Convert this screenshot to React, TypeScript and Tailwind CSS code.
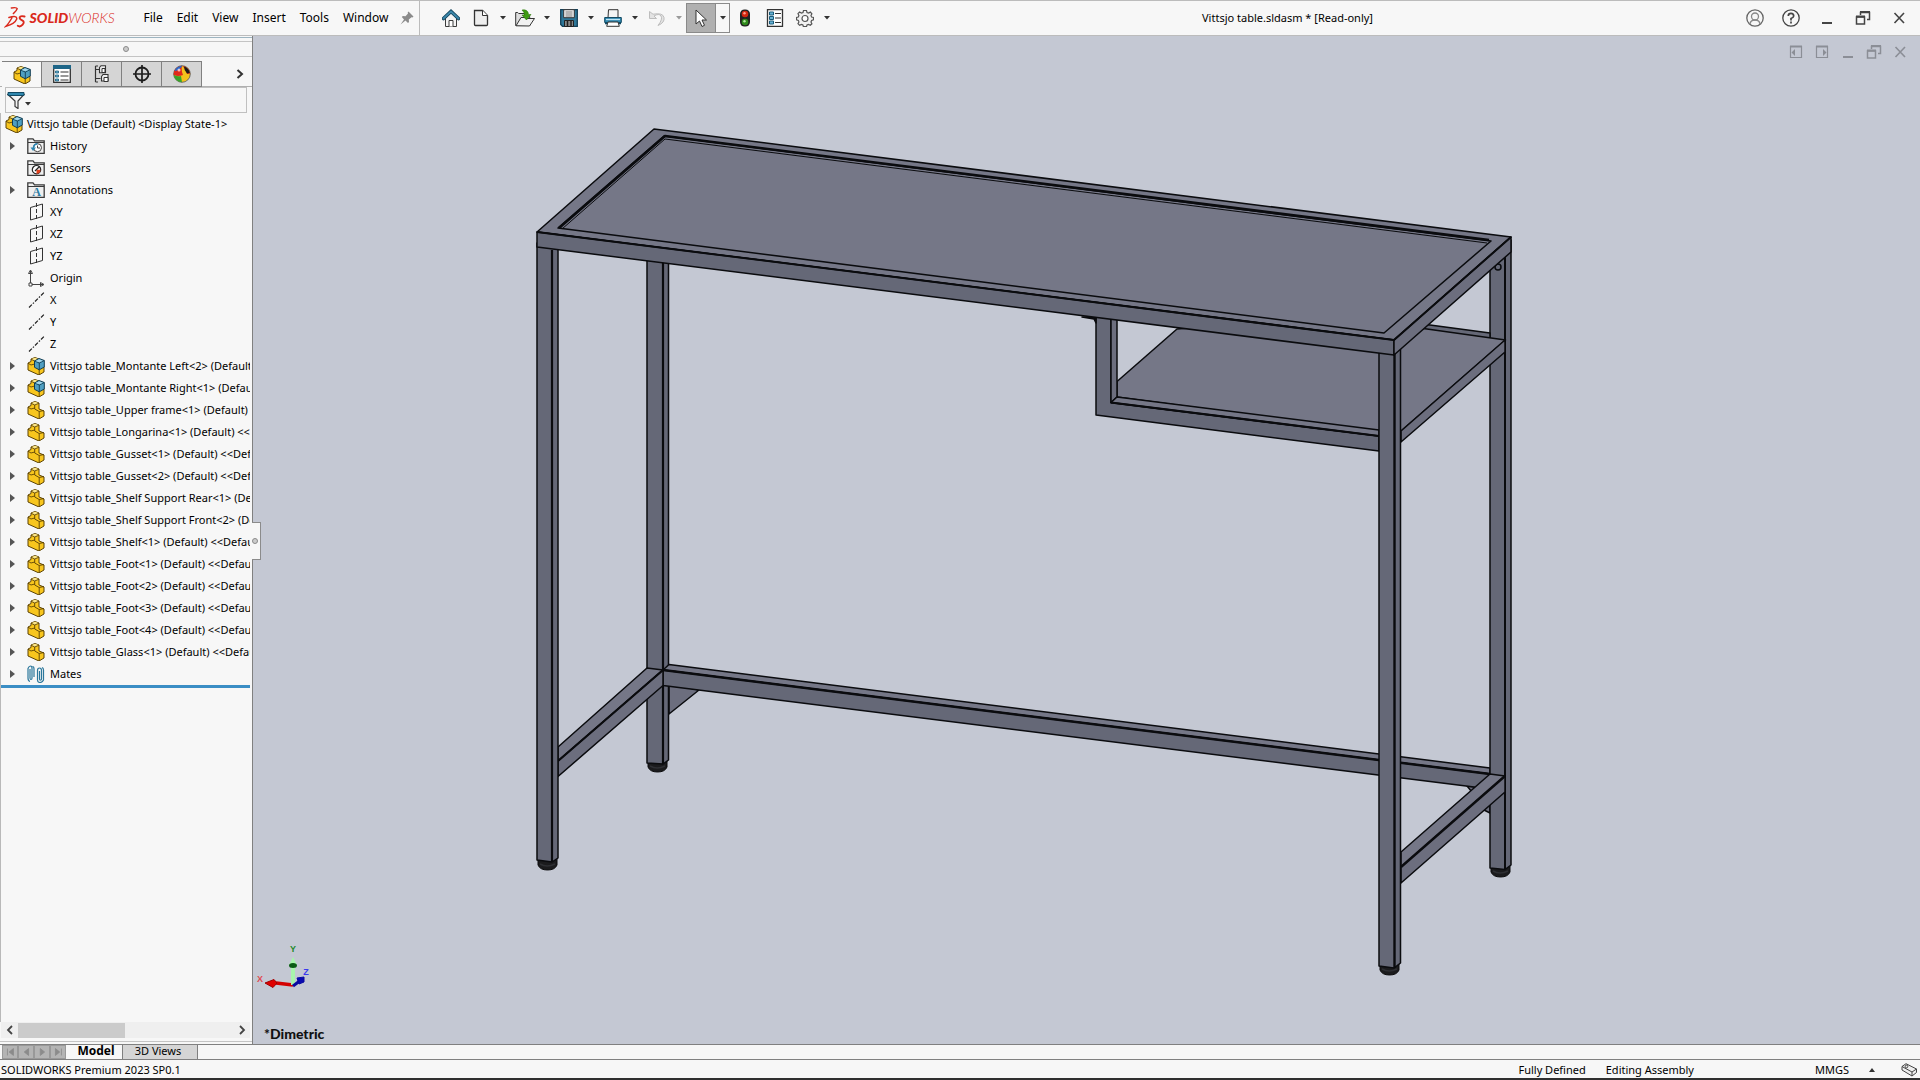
import React from "react";

type P = { children: React.ReactNode; s?: number; className?: string };
const Svg = ({ children, s = 18, className = "" }: P) => (
  <svg width={s} height={s} viewBox={`0 0 ${s} ${s}`} className={`shrink-0 ${className}`} fill="none" aria-hidden="true">
    {children}
  </svg>
);

/* ---------- toolbar icons ---------- */
const HomeIcon = () => (
  <Svg>
    <path d="M3.5 9v8.5h11V9L9 4z" fill="#f4f4f4" stroke="#3c3c3c" />
    <path d="M7 17.5v-6h4v6" fill="#fff" stroke="#3c3c3c" />
    <path d="M1.5 9.5 9 2.5l7.500 7" stroke="#12445e" strokeWidth="3.600" strokeLinecap="round" />
    <path d="M1.500 9.500 9 2.500l7.500 7" stroke="#3c87aa" strokeWidth="1.800" strokeLinecap="round" />
  </Svg>
);
const NewIcon = () => (
  <Svg>
    <path d="M2.500 1.500h8l5 5v9q0 1-1 1h-11q-1 0-1-1z" fill="#eee" stroke="#333" strokeWidth="1.300" />
    <path d="M10.500 1.500v5h5" fill="#fff" stroke="#333" />
  </Svg>
);
const OpenIcon = () => (
  <svg width="20" height="18" viewBox="0 0 20 18" fill="none" aria-hidden="true">
    <path d="M.7 16.500v-13h2l1 1h6v3h5v9z" fill="#ddd" stroke="#333" />
    <path d="M1 16.800 6 8.500h4l1 1h8.500l-5 7.500z" fill="#f1f1f1" stroke="#333" />
    <path d="M7 1q6-1 6.500 4.500H16L11.500 11 7 6h2.500Q9.500 3 7 1z" fill="#3f9a12" stroke="#2b7a08" strokeWidth=".6" />
  </svg>
);
const SaveIcon = () => (
  <Svg>
    <path d="M.7.7h16.600v16.600H2.500L.7 15.500z" fill="#2d7799" stroke="#143f56" strokeWidth="1.300" />
    <path d="M3.700.7h10.600v8H3.700z" fill="#f2f2f2" stroke="#333" />
    <path d="M5.500 3h7M5.500 5h7M5.500 7h7" stroke="#777" />
    <path d="M4.500 11.500h9v6h-9z" fill="#888" stroke="#222" />
    <path d="M7.500 12v5M11 12v5" stroke="#222" strokeWidth="1.500" />
  </Svg>
);
const PrintIcon = () => (
  <Svg>
    <path d="M4.500.7h9.500v8H4z" fill="#f4f4f4" stroke="#333" />
    <path d="M.7 8.500h16.600v5H.7z" fill="#2f87ae" stroke="#134a63" />
    <path d="M2 10.500h14" stroke="#bfe3f2" strokeWidth="1.300" />
    <path d="M4 13h10l1.300 4.300H2.700z" fill="#fff" stroke="#333" />
    <path d="M1 14.500h2M15 14.500h2" stroke="#134a63" strokeWidth="1.300" />
  </Svg>
);
const UndoIcon = () => (
  <Svg>
    <path d="M1.500 2.500v7h7L6 7q5-3 7 0t-3 9.500q7-3 6-8T5 5.200z" fill="#e3e3e3" stroke="#bdbdbd" strokeLinejoin="round" />
  </Svg>
);
const CursorIcon = () => (
  <Svg>
    <path d="M4 1v14l3.500-3 2.500 5.500 2.500-1.200L10 11h4.500z" fill="#fff" stroke="#333" />
  </Svg>
);
const LightIcon = () => (
  <Svg>
    <rect x="4" y=".5" width="10" height="17" rx="4.500" fill="#222" />
    <circle cx="9" cy="5" r="3.300" fill="#d3260f" />
    <circle cx="8.500" cy="4.300" r="1.200" fill="#ffa08e" />
    <circle cx="9" cy="13" r="3.300" fill="#2f8a1b" />
    <circle cx="8.500" cy="12.300" r="1.200" fill="#b3e6a0" />
  </Svg>
);
const ListIcon = () => (
  <Svg>
    <path d="M1.500.7h15v16.600h-15z" fill="#fff" stroke="#333" strokeWidth="1.300" />
    <path d="M3.500 3h4v3h-4zM3.500 7.500h4v3h-4zM3.500 12h4v3h-4z" fill="#69b4d6" stroke="#195b7a" />
    <path d="M9 4.500h6M9 9h6M9 13.500h6" stroke="#333" />
  </Svg>
);
const GearIcon = () => (
  <Svg>
    <path d="M7.500 1.500h3l.5 2 1.500.6 1.900-1 1.500 1.700-.9 1.800.6 1.500 1.900.4v2.300l-1.900.7-.6 1.500.9 1.800-1.600 1.500-1.800-.9-1.500.6-.5 1.700H7.400l-.5-1.700-1.500-.6-1.800.9L2 14.700l.9-1.800-.6-1.500-1.800-.6V8.400L2.300 8l.6-1.500L2 4.700l1.600-1.600 1.800 1L7 3.500z" fill="#f2f2f2" stroke="#555" strokeWidth="1.200" />
    <circle cx="9" cy="9.500" r="3" fill="#fff" stroke="#555" strokeWidth="1.200" />
  </Svg>
);
const Caret = ({ dim = false }: { dim?: boolean }) => (
  <svg width="6" height="4" viewBox="0 0 6 4" className="shrink-0" aria-hidden="true">
    <path d="M0 0h6L3 3.500z" fill={dim ? "#9a9a9a" : "#333"} />
  </svg>
);

/* ---------- tree icons ---------- */
const PartBody = () => (
  <>
    <path d="M1 6 4 4.500V2l4-1.500 4 1.500v6l5 2v5l-5 3L1 13z" fill="#f8c61e" stroke="#5c4305" strokeLinejoin="round" />
    <path d="M4 2.200 7.700 4 12 2.200 8 .7z" fill="#fbe68a" />
    <path d="M4 2.200 7.700 4v4l4.500 2.500L17 9.500M7.700 4 12 2.200M12.200 10.500V18M1 6.200 4 8l3.700-1" stroke="#5c4305" strokeWidth=".9" />
  </>
);
const PartIcon = () => (
  <Svg>
    <PartBody />
  </Svg>
);
const AsmIcon = () => (
  <Svg>
    <PartBody />
    <path d="M7.500 4 12 1.500 17.300 3.500V10l-5 2.800-4.800-2.500z" fill="#4f9fc2" stroke="#123d52" strokeLinejoin="round" />
    <path d="M7.500 4 12.300 6v6.500M12.300 6l5-2.500" stroke="#123d52" strokeWidth=".9" />
    <path d="M8.500 4 12 2.300 16 3.700 12.300 5.300z" fill="#a6d7eb" />
  </Svg>
);
const Folder = () => <path d="M.8 16.300V1.800H6l1.500 2h9.700v12.500z" fill="#efefef" stroke="#3a3a3a" strokeWidth="1.300" />;
const HistoryIcon = () => (
  <Svg>
    <Folder />
    <path d="M1 5.500h16" stroke="#3a3a3a" />
    <circle cx="10.500" cy="10.700" r="4" fill="#fff" stroke="#444" />
    <path d="M10.500 8.500v2.500h2.500" stroke="#444" />
    <path d="M10.500 6.700a4 4 0 0 0-4 4" stroke="#2b86b3" strokeWidth="1.500" />
    <path d="M3.500 10.500h5.500l-3 3.500z" fill="#2b86b3" />
  </Svg>
);
const SensorIcon = () => (
  <Svg>
    <Folder />
    <path d="M1 5.500h16" stroke="#3a3a3a" />
    <circle cx="9.500" cy="10.700" r="4.200" fill="#fff" stroke="#222" strokeWidth="1.200" />
    <path d="M9.500 10.700h4a4 4 0 0 1-4 4z" fill="#e2401c" />
    <path d="m8 12 4-4" stroke="#222" strokeWidth="1.300" />
  </Svg>
);
const AnnotIcon = () => (
  <Svg>
    <Folder />
    <path d="M1 5.500h16" stroke="#3a3a3a" />
    <text x="9.500" y="15" textAnchor="middle" fontSize="12" fontWeight="700" fill="#2b7da5" fontFamily="Liberation Serif, serif">A</text>
  </Svg>
);
const PlaneIcon = () => (
  <Svg>
    <path d="M3.500 4.500 15.500 1v12.500L3.500 17z" stroke="#333" />
    <path d="M9.500 0v18" stroke="#333" strokeDasharray="4 2" />
  </Svg>
);
const OriginIcon = () => (
  <Svg>
    <path d="M3.500 14V2M5 15.500h11M1.500 4.500 3.500 1l2 3.500zM13.500 13.500l3.500 2-3.500 2z" stroke="#444" />
    <path d="M2 14h3v3H2z" fill="#fff" stroke="#444" />
  </Svg>
);
const AxisIcon = () => (
  <Svg>
    <path d="M2 16.500 17 1.500" stroke="#222" strokeWidth="1.200" strokeDasharray="4 1.500 1.500 1.500" />
  </Svg>
);
const MatesIcon = () => (
  <Svg>
    <path d="M3 4v9q0 1.500 1 1.500t1-1.500V3.500Q5 1 3.500 1T1 3.500V13q0 3 2 3.500M5.500 1.500Q7 1.500 7 4v8" stroke="#2b779b" strokeWidth="1.200" />
    <path d="M12.500 6v8q0 1.200 1 1.200t1-1.200V5.500q0-2.500-2-2.500t-2 2.500V15q0 2.500 2.500 2.500T16.500 15V5q0-2-1.500-2.500" stroke="#2b779b" strokeWidth="1.200" />
  </Svg>
);

/* ---------- panel tab icons ---------- */
const PropIcon = () => (
  <Svg>
    <path d="M.7.7h16.600v16.600H.7z" fill="#fff" stroke="#333" strokeWidth="1.300" />
    <path d="M0 0h18v4H0z" fill="#1e6587" />
    <path d="M2.500 6h3v2h-3zM2.500 10h3v2h-3zM2.500 14h3v2h-3z" fill="#69b4d6" stroke="#195b7a" strokeWidth=".8" />
    <path d="M7.500 7h8M7.500 11h8M7.500 15h8" stroke="#333" strokeWidth="1.200" />
  </Svg>
);
const ConfigIcon = () => (
  <Svg>
    <path d="M2.500 1v16M2.500 4.500h4M2.500 13.500h5M5 1H2.500M5 17H2.500" stroke="#333" strokeWidth="1.200" />
    <path d="M6.500 2.500 8 .7h4.500v7h-6zM8.500 11.500l1.500-2h5v6.500H8.500z" fill="#eee" stroke="#333" strokeWidth="1.100" />
    <path d="M9 3.500h3v4H9zM11 12.500h4v4h-4z" fill="#fff" stroke="#333" />
  </Svg>
);
const TargetIcon = () => (
  <Svg>
    <circle cx="9" cy="9" r="6.500" stroke="#1c1c1c" strokeWidth="1.800" />
    <path d="M9 0v18M0 9h18" stroke="#1c1c1c" strokeWidth="1.700" />
  </Svg>
);
const BallIcon = () => (
  <Svg>
    <circle cx="9" cy="9" r="8.300" fill="#f2c21c" stroke="#555" strokeWidth=".8" />
    <path d="M9 .7A8.300 8.300 0 0 0 .7 10Q5 12 10 10 8 5 9 .7z" fill="#df2a1c" />
    <path d="M9 .7A8.300 8.300 0 0 0 1.500 6Q5 6 8.500 2z" fill="#2a67c8" />
    <path d="M.8 10Q5 12 8 11l1 6.300A8.300 8.300 0 0 1 .8 10z" fill="#38a32c" />
    <path d="M9.500 1q6 .5 7.800 7.500L14 9q-1-5-4.500-8z" fill="#df2a1c" />
    <path d="M11 1.500q5 1.500 5.800 6.500L14 8.500q-3-3-3-7z" fill="#1b1b1b" />
    <circle cx="6" cy="5" r="1.500" fill="#fff" opacity=".7" />
  </Svg>
);

const RestoreIcon = () => (
  <Svg s={16}>
    <path d="M5.500 5V2.500h9v7H12" stroke="currentColor" strokeWidth="1.500" />
    <path d="M1.500 7h8v7h-8z" stroke="currentColor" strokeWidth="1.500" />
    <path d="M5 2h10M1 6.500h9" stroke="currentColor" strokeWidth="2" />
  </Svg>
);
const MinIcon = () => (
  <Svg s={16}>
    <path d="M3 13h10" stroke="currentColor" strokeWidth="2" />
  </Svg>
);
const CloseIcon = () => (
  <Svg s={16}>
    <path d="m3.500 3 9.500 10M13 3 3.500 13" stroke="currentColor" strokeWidth="1.600" />
  </Svg>
);
const PaneIcon = ({ right = false }: { right?: boolean }) => (
  <Svg s={16}>
    <path d="M2.500 2.500h11v11h-11z" stroke="currentColor" strokeWidth="1.200" />
    <path d="M2 2.500h12" stroke="currentColor" strokeWidth="2" />
    <path d={right ? "m9 5 3.500 3.500L9 12z" : "M7 5 3.500 8.500 7 12z"} fill="currentColor" />
  </Svg>
);

const menus = ["File", "Edit", "View", "Insert", "Tools", "Window"];

type Row = { label: string; icon: React.ReactNode; open?: boolean };
const rows: Row[] = [
  { label: "History", icon: <HistoryIcon />, open: true },
  { label: "Sensors", icon: <SensorIcon /> },
  { label: "Annotations", icon: <AnnotIcon />, open: true },
  { label: "XY", icon: <PlaneIcon /> },
  { label: "XZ", icon: <PlaneIcon /> },
  { label: "YZ", icon: <PlaneIcon /> },
  { label: "Origin", icon: <OriginIcon /> },
  { label: "X", icon: <AxisIcon /> },
  { label: "Y", icon: <AxisIcon /> },
  { label: "Z", icon: <AxisIcon /> },
  { label: "Vittsjo table_Montante Left<2> (Default)", icon: <AsmIcon />, open: true },
  { label: "Vittsjo table_Montante Right<1> (Default)", icon: <AsmIcon />, open: true },
  { label: "Vittsjo table_Upper frame<1> (Default)", icon: <PartIcon />, open: true },
  { label: "Vittsjo table_Longarina<1> (Default) <<Default>", icon: <PartIcon />, open: true },
  { label: "Vittsjo table_Gusset<1> (Default) <<Default>", icon: <PartIcon />, open: true },
  { label: "Vittsjo table_Gusset<2> (Default) <<Default>", icon: <PartIcon />, open: true },
  { label: "Vittsjo table_Shelf Support Rear<1> (Default)", icon: <PartIcon />, open: true },
  { label: "Vittsjo table_Shelf Support Front<2> (Default)", icon: <PartIcon />, open: true },
  { label: "Vittsjo table_Shelf<1> (Default) <<Default>", icon: <PartIcon />, open: true },
  { label: "Vittsjo table_Foot<1> (Default) <<Default>", icon: <PartIcon />, open: true },
  { label: "Vittsjo table_Foot<2> (Default) <<Default>", icon: <PartIcon />, open: true },
  { label: "Vittsjo table_Foot<3> (Default) <<Default>", icon: <PartIcon />, open: true },
  { label: "Vittsjo table_Foot<4> (Default) <<Default>", icon: <PartIcon />, open: true },
  { label: "Vittsjo table_Glass<1> (Default) <<Default>", icon: <PartIcon />, open: true },
  { label: "Mates", icon: <MatesIcon />, open: true },
];

const tools = [
  { name: "New", icon: <NewIcon /> },
  { name: "Open", icon: <OpenIcon /> },
  { name: "Save", icon: <SaveIcon /> },
  { name: "Print", icon: <PrintIcon /> },
  { name: "Undo", icon: <UndoIcon />, dim: true },
];

const Tool = ({ name, children }: { name: string; children: React.ReactNode }) => (
  <button aria-label={name} className="flex h-[30px] w-[30px] items-center justify-center">
    {children}
  </button>
);
const Drop = ({ name, dim }: { name: string; dim?: boolean }) => (
  <button aria-label={`${name} options`} className="flex h-[30px] w-[14px] items-center justify-center">
    <Caret dim={dim} />
  </button>
);

function Header() {
  return (
    <header className="flex h-9 shrink-0 items-center border-y border-[#bcbcbc] bg-[#f7f7f7]">
      <div className="mr-4 flex h-[34px] w-[420px] shrink-0 items-center border-r border-[#bcbcbc] pl-1">
        <svg width="24" height="24" viewBox="0 0 24 24" fill="none" stroke="#da291c" strokeLinecap="round" aria-label="DS">
          <path d="M7.500 1.800Q13 .8 13.500 2.500 13 4.500 9.500 7.500" strokeWidth="1.500" />
          <path d="M5 11.500q8.500-2.500 8 1.500-2 5-11 7.500Q4.500 18 8 12" strokeWidth="1.500" />
          <path d="M21 10.500q-4.500-1-5 .8t2.500 3.200.5 4.300-5 1.200" strokeWidth="1.900" />
        </svg>
        <div className="ml-[2px] w-[110px] font-['Lato'] text-[14px] leading-5 text-[#da291c] italic">
          <b className="font-black">SOLID</b>
          <span className="font-light">WORKS</span>
        </div>
        <nav className="-ml-px flex">
          {menus.map((m) => (
            <button key={m} className="px-[7px] text-[12px] leading-7">{m}</button>
          ))}
        </nav>
        <button aria-label="Pin menu" className="ml-auto flex h-7 w-6 items-center justify-center">
          <Svg s={14}>
            <path d="m8.500.5 5 5-1 1-1-.3-2.700 2.300.2 2.500-1 1-2.500-2.500L.5 13.500l3.500-5L1.800 6l1-1 2.700.2L8 2.500l-.3-1z" fill="#8b8b8b" />
          </Svg>
        </button>
      </div>
      <div className="flex items-center">
        <Tool name="Home"><HomeIcon /></Tool>
        {tools.map((t) => (
          <div key={t.name} className="flex">
            <Tool name={t.name}>{t.icon}</Tool>
            <Drop name={t.name} dim={t.dim} />
          </div>
        ))}
        <div className="flex border border-[#8a8a8a]">
          <button aria-label="Select" className="flex h-7 w-[29px] items-center justify-center border-r border-[#8a8a8a] bg-[#b0b0b0]">
            <CursorIcon />
          </button>
          <button aria-label="Select options" className="flex h-7 w-[13px] items-center justify-center">
            <Caret />
          </button>
        </div>
        <Tool name="Rebuild"><LightIcon /></Tool>
        <Tool name="File properties"><ListIcon /></Tool>
        <Tool name="Options"><GearIcon /></Tool>
        <Drop name="Options" />
      </div>
      <h1 className="flex-1 pl-1 text-center">Vittsjo table.sldasm * [Read-only]</h1>
      <div className="flex pr-[3px] text-[#444] [&>button]:flex [&>button]:h-7 [&>button]:w-9 [&>button]:items-center [&>button]:justify-center">
        <button aria-label="Account">
          <Svg>
            <circle cx="9" cy="9" r="8.200" stroke="#666" strokeWidth="1.300" />
            <circle cx="9" cy="7.500" r="3.500" stroke="#888" strokeWidth="1.300" />
            <path d="M4 15q.5-4 5-4t5 4" stroke="#888" strokeWidth="1.300" />
          </Svg>
        </button>
        <button aria-label="Help">
          <Svg>
            <circle cx="9" cy="9" r="8.200" stroke="#444" strokeWidth="1.300" />
            <path d="M6.300 7q0-2.700 2.700-2.700T11.700 7Q11.700 8.500 9 9.500v2M9 12.500v2" stroke="#444" strokeWidth="1.700" />
          </Svg>
        </button>
        <button aria-label="Minimize"><MinIcon /></button>
        <button aria-label="Restore"><RestoreIcon /></button>
        <button aria-label="Close"><CloseIcon /></button>
      </div>
    </header>
  );
}

const panelTabs = [
  { name: "PropertyManager", icon: <PropIcon /> },
  { name: "ConfigurationManager", icon: <ConfigIcon /> },
  { name: "DimXpertManager", icon: <TargetIcon /> },
  { name: "DisplayManager", icon: <BallIcon /> },
];

function Panel() {
  return (
    <aside className="relative z-10 flex w-[253px] shrink-0 flex-col border-r border-[#808080] bg-[#f7f7f7]">
      <div className="h-[6px] border-b border-[#c4c4c4] pt-px">
        <div className="h-px bg-[#9db4c0]" />
      </div>
      <div className="flex h-[15px] items-center justify-center border-b border-[#c4c4c4]">
        <span className="h-[6px] w-[6px] rounded-full border border-[#8b8b8b] bg-[#ccc]" />
      </div>
      <div className="mt-1 flex h-[26px] border-b border-[#b0b0b0] pl-[2px]">
        <button aria-label="FeatureManager" className="flex h-[26px] w-10 items-center justify-center border-t border-r border-[#808080] bg-[#f7f7f7]">
          <AsmIcon />
        </button>
        {panelTabs.map((t) => (
          <button key={t.name} aria-label={t.name} className="flex h-[26px] w-10 items-center justify-center border-y border-r border-[#808080] bg-[#d5d5d5]">
            {t.icon}
          </button>
        ))}
        <button aria-label="More tabs" className="ml-auto flex w-6 items-center justify-center">
          <Svg s={10}>
            <path d="m2.500 1 4.500 4-4.500 4" stroke="#333" strokeWidth="2" />
          </Svg>
        </button>
      </div>
      <div className="mr-[5px] ml-[5px] flex h-[26px] items-center border border-[#c0c0c0] pl-px">
        <Svg>
          <path d="M1 3.500h16l-6 6.500v7.500l-3-2V10z" fill="#f4f4f4" stroke="#3a3a3a" strokeWidth="1.200" />
          <path d="M1 1.500h16v3H1z" fill="#2f87ae" stroke="#134a63" />
        </Svg>
        <div className="mt-2">
          <Caret />
        </div>
        <input aria-label="Filter tree" className="min-w-0 flex-1 bg-transparent px-1 outline-none" />
      </div>
      <div className="mr-[2px] min-h-0 flex-1 overflow-hidden border-l border-[#b9b9b9] whitespace-nowrap">
        <div className="flex h-[22px] items-center pl-1">
          <AsmIcon />
          <span className="ml-1">Vittsjo table (Default) &lt;Display State-1&gt;</span>
        </div>
        <ul className="border-b-3 border-[#3b8ec5]">
          {rows.map((r) => (
            <li key={r.label} className="flex h-[22px] items-center pl-[6px]">
              {r.open ? (
                <button aria-label={`Expand ${r.label}`} className="flex w-5 shrink-0 pl-[3px]">
                  <svg width="5" height="8" viewBox="0 0 5 8" aria-hidden="true">
                    <path d="M0 0v8l5-4z" fill="#555" />
                  </svg>
                </button>
              ) : (
                <span className="w-5 shrink-0" />
              )}
              {r.icon}
              <span className="ml-[5px]">{r.label}</span>
            </li>
          ))}
        </ul>
      </div>
      <div className="mr-[2px] mb-[3px] ml-px flex h-4 items-center bg-[#efefef]">
        <button aria-label="Scroll left" className="flex w-[17px] justify-center">
          <Svg s={10}><path d="M7 1 3 5l4 4" stroke="#444" strokeWidth="1.800" /></Svg>
        </button>
        <div className="h-[15px] w-[107px] bg-[#cbcbcb]" />
        <button aria-label="Scroll right" className="ml-auto flex w-[17px] justify-center">
          <Svg s={10}><path d="m3 1 4 4-4 4" stroke="#444" strokeWidth="1.800" /></Svg>
        </button>
      </div>
      <div className="h-[3px] border-t border-[#c4c4c4]" />
      <button aria-label="Collapse panel" className="absolute top-[486px] -right-[9px] flex h-[38px] w-[9px] items-center border border-l-0 border-[#8b8b8b] bg-[#f7f7f7]">
        <span className="h-[6px] w-[6px] rounded-full border border-[#8b8b8b] bg-[#ccc]" />
      </button>
    </aside>
  );
}

const Foot = ({ x, y }: { x: number; y: number }) => (
  <g>
    <path d={`M${x} ${y - 3}h19v7q-2 5-9.500 5t-9.500-5z`} fill="#1b1b1d" stroke="#0b0b0c" strokeWidth="1" />
    <path d={`M${x + 2} ${y + 3}q7 4 15 0`} stroke="#2e2f33" fill="none" />
  </g>
);

/* Dimetric projection of the assembly, in window coordinates. */
function Model() {
  const F = "#656877";
  const T = "#757787";
  const S = "#6c6e7e";
  return (
    <svg viewBox="253 36 1667 1008" className="h-full w-full" fill="none" stroke="#0a0b0e" strokeWidth="1.500" strokeLinejoin="round" role="img" aria-label="Vittsjo table">
      <Foot x={648} y={763} />
      <Foot x={1491} y={868} />
      <path d="M669 684v30l30-24z" fill={S} />
      <path d="M647 250v513l16 1 5.500-4V250z" fill={F} />
      <path d="M663 255v509" strokeWidth="2.200" />
      <path d="m1467 786 8 1-3 5zM1484 810l6-5v8z" fill={S} />
      <path d="m663 670 6-5.500L1490 768v6z" fill={T} />
      <path d="M663 670v15.500L1490 789v-15z" fill={F} />
      <path d="m663 670 827 104" strokeWidth="2.500" />
      <path d="M1490 250v618l15 1.500 6-4.500V240z" fill={F} />
      <path d="M1505 250v619" strokeWidth="2" />
      <path d="m647 668 16 2-105 91v-14z" fill={T} />
      <path d="M663 670v15.500l-105 91V761z" fill={S} />
      <path d="m663 670-105 91" strokeWidth="2.200" />
      <path d="m1401 852 89-78 15 2-104 91z" fill={T} />
      <path d="M1505 776v16l-104 91v-16z" fill={S} />
      <path d="m1505 776-104 91" strokeWidth="2.400" />

      <path d="m1400 321 90 12v6l-90-12z" fill={F} />
      <path d="M1117 381.500 1177 329l150-12 100 12 78.500 11L1401 431v2l-22-1-262-35z" fill={T} />
      <path d="M1505 340v12l-104 90v-11z" fill={S} />
      <path d="M1096 315v100l283 36v-15l-268-33.300V315z" fill={F} />
      <path d="M1111 315v87.500l6-5.500v-82z" fill={S} />
      <path d="m1111 402.500 6-5.500 262 33v6z" fill={T} />
      <path d="m1111 402.500 268 33.500" strokeWidth="2.200" />
      <path d="M1082 317h14v6l-2-4z" fill="#0a0b0e" />

      <Foot x={538} y={861} />
      <Foot x={1380} y={966} />
      <path d="M537 243v617l15 2 6-4V243z" fill={F} />
      <path d="M552 250v612" strokeWidth="2.200" />
      <path d="M1379 345v621l15 2 6.500-5V345z" fill={F} />
      <path d="M1394.500 352v616" strokeWidth="2.400" />

      <circle cx="1498" cy="267" r="3" fill={F} />
      <path d="M654 129 537 232l857 108 117-103z" fill={T} />
      <path d="m537 232 857 108v15L537 247z" fill={F} />
      <path d="m1394 340 117-103v15l-117 103z" fill={S} />
      <path d="m537 232 857 108 117-103" strokeWidth="2" />
      <path d="M664 136 558 228l826 105 107-92z" fill={T} />
      <path d="m559 228 106-92 824 104" strokeWidth="2.600" />
      <path d="m562 229 103-90 822 104" strokeWidth="1" />

      <g strokeWidth="1" strokeLinejoin="miter">
        <path d="m293 985-17-2" stroke="#d40000" strokeWidth="3.500" />
        <path d="m265 983 9-3.500 3 3.500-4 4.500z" fill="#e00000" stroke="#a00000" />
        <path d="M293 985v-20" stroke="#a8f5ac" strokeWidth="4" />
        <path d="m289 965 4-8 4 8z" fill="#a8f5ac" stroke="none" />
        <ellipse cx="293" cy="965.500" rx="4" ry="2.500" fill="#0a5a14" stroke="none" />
        <path d="m293 986 8-6" stroke="#0a0aa0" strokeWidth="3" />
        <path d="m297 978 7-1v5l-5 2z" fill="#0a0ab0" stroke="#0a0aa0" />
      </g>
      <g stroke="none" fontSize="9" fontFamily="Liberation Sans, sans-serif" fontWeight="700" textAnchor="middle">
        <text x="293" y="952" fill="#1e8a2a">Y</text>
        <text x="260" y="982" fill="#e04a50">X</text>
        <text x="306" y="975" fill="#3a3aee">Z</text>
      </g>
    </svg>
  );
}

function Viewport() {
  return (
    <main className="relative min-w-0 flex-1 bg-[#c4c8d3]">
      <Model />
      <div className="absolute top-2 right-[7px] flex text-[#8b8e96] [&>button]:flex [&>button]:w-[26px] [&>button]:justify-center">
        <button aria-label="Pane left"><PaneIcon /></button>
        <button aria-label="Pane right"><PaneIcon right /></button>
        <button aria-label="Minimize document"><MinIcon /></button>
        <button aria-label="Restore document"><RestoreIcon /></button>
        <button aria-label="Close document"><CloseIcon /></button>
      </div>
      <p className="absolute bottom-0 left-[11px] font-['Lato'] text-[14px] leading-5 font-black text-[#111]">*Dimetric</p>
    </main>
  );
}

const navIcons = ["M4 3v8M11 3v8L6 7z", "M10 3v8L5 7z", "M5 3v8l5-4z", "M11 3v8M4 3v8l5-4z"];

export default function App() {
  return (
    <div className="flex h-screen flex-col overflow-hidden bg-[#f7f7f7] font-['Noto_Sans','Open_Sans',sans-serif] text-[11px] leading-4 text-black">
      <Header />
      <div className="flex min-h-0 flex-1">
        <Panel />
        <Viewport />
      </div>
      <div className="flex h-4 shrink-0 border-y border-[#808080] pl-[2px]">
        {navIcons.map((d, i) => (
          <button key={d} aria-label={["First tab", "Previous tab", "Next tab", "Last tab"][i]} className="flex w-4 items-center justify-center border border-[#999] bg-[#b4b4b4]">
            <svg width="14" height="12" viewBox="0 0 14 14" fill="#8b8b8b" stroke="#8b8b8b" aria-hidden="true">
              <path d={d} />
            </svg>
          </button>
        ))}
        <button className="flex w-[57px] justify-center border-r border-[#808080] pl-1 text-[12px] leading-3 font-bold">Model</button>
        <button className="flex w-[75px] justify-center border-r border-[#808080] bg-[#d5d5d5] pr-1 text-[11px] leading-3">3D Views</button>
      </div>
      <footer className="flex h-5 shrink-0 items-center border-b-2 border-[#2f2f2f] pt-px pl-px">
        <span>SOLIDWORKS Premium 2023 SP0.1</span>
        <span className="ml-auto">Fully Defined</span>
        <span className="ml-5">Editing Assembly</span>
        <button className="ml-[121px] flex items-center gap-5">
          MMGS
          <svg width="6" height="4" viewBox="0 0 6 4" aria-hidden="true"><path d="M0 4h6L3 0z" fill="#333" /></svg>
        </button>
        <button aria-label="Tags" className="ml-[26px] pr-[2px]">
          <svg width="17" height="14" viewBox="0 0 17 14" fill="#eee" stroke="#444" aria-hidden="true">
            <path d="M1 3.500 5 .7 15.500 6v3.500L11 13 1 7z" />
            <path d="m1 3.500 10 5.500 4.500-3M11 9v4" fill="none" />
            <circle cx="5.500" cy="3.500" r="1.300" />
          </svg>
        </button>
      </footer>
    </div>
  );
}
